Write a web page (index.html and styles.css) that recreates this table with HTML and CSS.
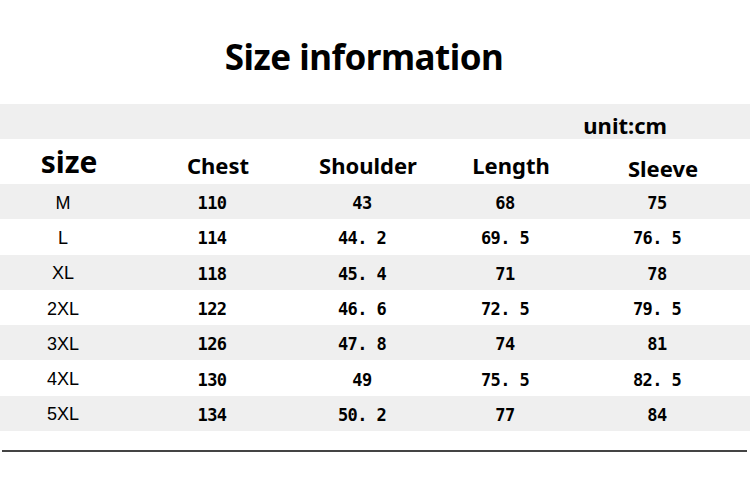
FILE: index.html
```html
<!DOCTYPE html>
<html>
<head>
<meta charset="utf-8">
<link rel="stylesheet" href="styles.css">
</head>
<body>
<div class="page">
  <h1 class="title">Size information</h1>
  <div class="unit-band"><span class="unit">unit:cm</span></div>
  <div class="table">
    <div class="row head">
      <div class="cell hsize">size</div>
      <div class="cell">Chest</div>
      <div class="cell">Shoulder</div>
      <div class="cell">Length</div>
      <div class="cell low">Sleeve</div>
    </div>
    <div class="row data shade"><div class="cell sz">M</div><div class="cell num">110</div><div class="cell num">43</div><div class="cell num">68</div><div class="cell num">75</div></div>
    <div class="row data"><div class="cell sz">L</div><div class="cell num">114</div><div class="cell num">44. 2</div><div class="cell num">69. 5</div><div class="cell num">76. 5</div></div>
    <div class="row data shade"><div class="cell sz">XL</div><div class="cell num">118</div><div class="cell num">45. 4</div><div class="cell num">71</div><div class="cell num">78</div></div>
    <div class="row data"><div class="cell sz">2XL</div><div class="cell num">122</div><div class="cell num">46. 6</div><div class="cell num">72. 5</div><div class="cell num">79. 5</div></div>
    <div class="row data shade"><div class="cell sz">3XL</div><div class="cell num">126</div><div class="cell num">47. 8</div><div class="cell num">74</div><div class="cell num">81</div></div>
    <div class="row data"><div class="cell sz">4XL</div><div class="cell num">130</div><div class="cell num">49</div><div class="cell num">75. 5</div><div class="cell num">82. 5</div></div>
    <div class="row data shade"><div class="cell sz">5XL</div><div class="cell num">134</div><div class="cell num">50. 2</div><div class="cell num">77</div><div class="cell num">84</div></div>
  </div>
  <div class="rule"></div>
</div>
</body>
</html>
```
FILE: styles.css
```css
html, body {
  margin: 0;
  padding: 0;
  background: #ffffff;
}
.page {
  width: 750px;
  height: 493px;
  overflow: hidden;
  color: #000;
  font-family: "Noto Sans", "Open Sans", sans-serif;
}
.title {
  margin: 0;
  height: 104px;
  box-sizing: border-box;
  padding-top: 33px;
  padding-right: 22px;
  text-align: center;
  font-size: 35px;
  font-weight: 700;
  line-height: 48px;
  letter-spacing: -0.5px;
}
.unit-band {
  height: 35px;
  background: #efefef;
  display: flex;
  justify-content: flex-end;
  align-items: flex-end;
  padding-right: 83px;
}
.unit {
  font-size: 22px;
  font-weight: 700;
  line-height: 28px;
}
.table {
  display: flex;
  flex-direction: column;
}
.row {
  display: grid;
  grid-template-columns: 126px 172px 128px 158px 146px;
}
.head {
  height: 45px;
}
.head .cell {
  padding-left: 12px;
  font-size: 22px;
  font-weight: 700;
  padding-top: 6px;
}
.head .hsize {
  font-size: 30px;
  padding-top: 0;
}
.head .low {
  padding-top: 12px;
}
.cell {
  display: flex;
  align-items: center;
  justify-content: center;
  box-sizing: border-box;
}
.data {
  height: 35.3px;
}
.shade {
  background: #efefef;
}
.sz {
  font-family: "Liberation Sans", Arial, sans-serif;
  font-size: 18px;
  padding-top: 3px;
}
.num {
  font-family: "DejaVu Sans Mono", monospace;
  font-weight: 700;
  font-size: 17px;
  letter-spacing: -0.6px;
  padding-top: 3px;
}
.rule {
  margin: 19px 3px 0 2px;
  height: 2px;
  background: #444;
}
```
